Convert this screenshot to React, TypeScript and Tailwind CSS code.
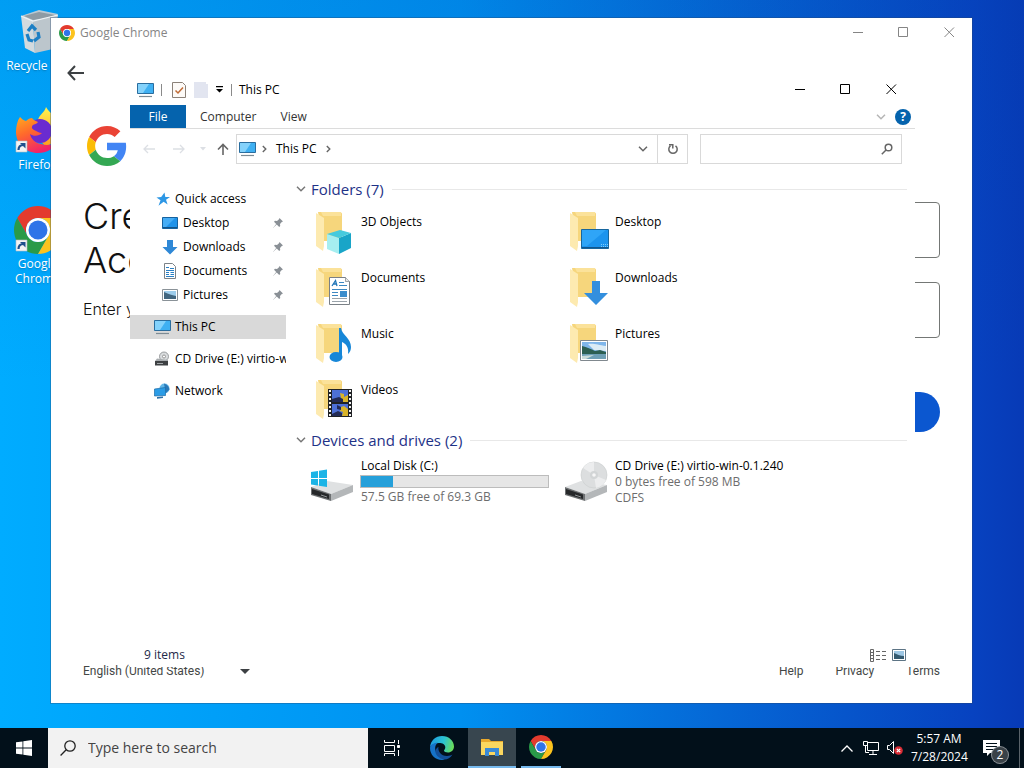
import { useState } from 'react'
import type { ReactNode } from 'react'

interface IconProps {
  className?: string
}

function ChromeIcon({ className }: IconProps) {
  return (
    <svg viewBox="0 0 48 48" className={className} aria-hidden="true">
      <path fill="#e33b2e" d="M24 12h20.78A24 24 0 0 0 3.22 12l10.39 18A12 12 0 0 1 24 12z" />
      <path fill="#2a9a48" d="M34.39 30 24 48A24 24 0 0 1 3.22 12l10.39 18a12 12 0 0 0 20.78 0z" />
      <path fill="#fcc31e" d="M24 12h20.78A24 24 0 0 1 24 48l10.39-18A12 12 0 0 0 24 12z" />
      <circle cx="24" cy="24" r="12" fill="#fff" />
      <circle cx="24" cy="24" r="9.5" fill="#2f74e8" />
    </svg>
  )
}

function GoogleLogo({ className }: IconProps) {
  return (
    <svg viewBox="0 0 48 48" className={className} aria-label="Google">
      <path fill="#EA4335" d="M24 9.5c3.54 0 6.71 1.22 9.21 3.6l6.85-6.85C35.9 2.38 30.47 0 24 0 14.62 0 6.51 5.38 2.56 13.22l7.98 6.19C12.43 13.72 17.74 9.5 24 9.5z" />
      <path fill="#4285F4" d="M46.98 24.55c0-1.57-.15-3.09-.38-4.55H24v9.02h12.94c-.58 2.96-2.26 5.48-4.78 7.18l7.73 6c4.51-4.18 7.09-10.36 7.09-17.65z" />
      <path fill="#FBBC05" d="M10.53 28.59c-.48-1.45-.76-2.99-.76-4.59s.27-3.14.76-4.59l-7.98-6.19C.92 16.46 0 20.12 0 24c0 3.88.92 7.54 2.56 10.78l7.97-6.19z" />
      <path fill="#34A853" d="M24 48c6.48 0 11.93-2.13 15.89-5.81l-7.73-6c-2.15 1.45-4.92 2.3-8.16 2.3-6.26 0-11.57-4.22-13.47-9.91l-7.98 6.19C6.51 42.62 14.62 48 24 48z" />
    </svg>
  )
}

function RecycleIcon() {
  return (
    <svg viewBox="0 0 48 48" className="size-12" aria-hidden="true">
      <path fill="#b9c9d3" d="m7 8 18-6 19 4-5 6-20 3z" />
      <path fill="#8e9ba4" d="m10 8 15-4 16 3-4 3-18 2z" />
      <path fill="#d3dade" d="m7 8 12 5 2 32-10-5z" />
      <path fill="#bcc6cc" d="m19 13 25-6-5 34-18 4z" />
      <path fill="none" stroke="#eef3f5" strokeWidth="1.2" d="m7 8 12 5 25-6" />
      <g fill="none" stroke="#1c7fc4" strokeWidth="3.2">
        <path d="m14 23 4-5 4 4" />
        <path d="m13 26 2 6 4 1" />
        <path d="m24 24 1 5-5 4" />
      </g>
    </svg>
  )
}

function ShortcutArrow() {
  return (
    <g>
      <path fill="#f4f4f4" stroke="#b5bcc4" strokeWidth=".6" d="M2 34h11v11H2z" />
      <path fill="none" stroke="#1f4f8c" strokeWidth="2.200" d="M4.500 43c0-3 1-5 5-5" />
      <path fill="#1f4f8c" d="M6 36h5.500v5.500z" />
    </g>
  )
}

function FirefoxIcon() {
  return (
    <svg viewBox="0 0 48 48" className="size-12" aria-hidden="true">
      <defs>
        <linearGradient id="fox" x1="0" y1="0" x2=".5" y2="1">
          <stop offset="0" stopColor="#ffab1f" />
          <stop offset=".45" stopColor="#ff6a2b" />
          <stop offset="1" stopColor="#f0226a" />
        </linearGradient>
        <linearGradient id="flame" x1="0" y1="0" x2="0" y2="1">
          <stop offset="0" stopColor="#fff34f" />
          <stop offset="1" stopColor="#ff9a1f" />
        </linearGradient>
      </defs>
      <path fill="url(#flame)" d="M32 0c-1 5-7 8-8 13-3 1-7 6-7 10l14 16c10-2 15-9 15-17 0-7-4-11-8-14-1-3-4-4-6-8z" />
      <circle cx="26" cy="24" r="12" fill="#6a2bd0" />
      <path fill="url(#fox)" d="M6 10c-3 4-4 10-4 15 0 12 10 21 22 21 9 0 16-4 20-12-5 4-11 5-17 3-6-1-10-5-11-10 4 3 9 2 12-1-3 0-5-2-8-3-2-1-3-3-1-5 1-1 4-1 5-3-2-1-5-2-6-4-2 0-4 1-6 3-3-1-4-2-6-4z" />
    </svg>
  )
}

function FirefoxShortcut() {
  return (
    <div className="relative size-12">
      <FirefoxIcon />
      <svg viewBox="0 0 48 48" className="absolute inset-0 size-12" aria-hidden="true"><ShortcutArrow /></svg>
    </div>
  )
}

function ChromeShortcut() {
  return (
    <div className="relative size-12">
      <ChromeIcon className="size-12" />
      <svg viewBox="0 0 48 48" className="absolute inset-0 size-12" aria-hidden="true"><ShortcutArrow /></svg>
    </div>
  )
}

function MonitorIcon() {
  return (
    <svg viewBox="0 0 18 16" className="h-4 w-[18px] shrink-0" aria-hidden="true">
      <path fill="#3fb0f2" stroke="#2a6d9e" d="M.5 1.500h16v10H.5z" />
      <path fill="#84d2fb" d="M1 2h11l-6 9H1z" />
      <path stroke="#7d8b94" strokeWidth="1.200" d="M2 14.500h13" />
    </svg>
  )
}

function StarIcon() {
  return (
    <svg viewBox="0 0 16 16" className="size-4 shrink-0" aria-hidden="true">
      <path fill="#2d97e5" d="m9.500 1.500.8 4.400 4.700.2-4 2.700 1.600 4.700-4-2.700-5.100 4 2-5.500L1.500 6.500l4.700-.6z" />
    </svg>
  )
}

function DesktopSmall() {
  return (
    <svg viewBox="0 0 16 16" className="size-4 shrink-0" aria-hidden="true">
      <path fill="#1f93ea" stroke="#15629f" d="M.5 2.500h15v11H.5z" />
      <path fill="#46adf5" d="M1 3h12L4 12H1z" />
      <path stroke="#135488" d="M1 12.500h14" />
    </svg>
  )
}

function DownloadSmall() {
  return (
    <svg viewBox="0 0 16 16" className="size-4 shrink-0" aria-hidden="true">
      <path fill="#2f88d6" d="M5 1h6v7h4.500L8 15.500.5 8H5z" />
    </svg>
  )
}

function DocumentSmall() {
  return (
    <svg viewBox="0 0 16 16" className="size-4 shrink-0" aria-hidden="true">
      <path fill="#fff" stroke="#7b8288" d="M2.500.5h8l3 3v12h-11z" />
      <path stroke="#2a80c4" d="M4 4.500h3M8 5.500h4M4 7.500h8M4 9.500h3M4 11.500h3M4 13.500h8M8.500 9.500h3.500M8.500 11.500h3.500" />
    </svg>
  )
}

function PictureSmall() {
  return (
    <svg viewBox="0 0 16 16" className="size-4 shrink-0" aria-hidden="true">
      <path fill="#fff" stroke="#8a9298" d="M.5 2.500h15v11H.5z" />
      <path fill="#9dcdec" d="M2 4h12v8H2z" />
      <path fill="#41667f" d="M2 5c3 1 6 3 12 4v3H2z" />
    </svg>
  )
}

function DriveSmall() {
  return (
    <svg viewBox="0 0 16 16" className="size-4 shrink-0" aria-hidden="true">
      <circle cx="10" cy="5.500" r="4.500" fill="#d9dcde" stroke="#85898c" strokeWidth=".8" />
      <circle cx="10" cy="5.500" r="1.500" fill="#fff" stroke="#777" strokeWidth=".7" />
      <path fill="#a9adb0" d="m1 10 2-2.500 11 1.500v1.500z" />
      <path fill="#3d4042" d="M1 10h13v4.500H1z" />
      <path stroke="#a2a6a8" d="M3 12.500h6" />
    </svg>
  )
}

function NetworkSmall() {
  return (
    <svg viewBox="0 0 16 16" className="size-4 shrink-0" aria-hidden="true">
      <circle cx="10.500" cy="5.500" r="5" fill="#63b7e8" />
      <path fill="#2a79b8" d="M10 .5c3 1 5 3 5.500 6L12 10l-1-4z" />
      <path fill="#2b9ce6" stroke="#1b6ba8" strokeWidth=".7" d="m.5 6 11-1.500v8L.5 13z" />
      <path fill="#2d6fa6" d="m3 14 6-.5v1.500l-6 .8z" />
    </svg>
  )
}

function Folder({ children }: { children: ReactNode }) {
  return (
    <svg viewBox="0 0 48 48" className="size-12 shrink-0" aria-hidden="true">
      <path fill="#f6d67c" d="M9 4h22c1 0 2 1 2 2v27H14z" />
      <path fill="#fbe29a" d="M12 4h20v4H14z" />
      <path fill="#fdeab0" d="m7 5 8 5v28l-1 5-7-5z" />
      {children}
    </svg>
  )
}

const folders: { name: string; art: ReactNode }[] = [
  {
    name: '3D Objects',
    art: (
      <g>
        <path fill="#a6eef0" d="m18 26 12 4v16l-12-5z" />
        <path fill="#19a5c8" d="m30 30 12-5v15l-12 6z" />
        <path fill="#46cadd" d="m18 26 13-4 11 3-12 5z" />
      </g>
    ),
  },
  {
    name: 'Desktop',
    art: (
      <g>
        <path fill="#1c94ee" stroke="#17669e" d="M18.500 21.500h27v19h-27z" />
        <path fill="#2fa5f7" d="M19 22h24L24 38h-5z" />
        <path stroke="#10568f" d="M19 39.500h26" />
        <path stroke="#7dcdfb" strokeDasharray="1 1" d="M38 36.500h7M38 38.500h7" />
      </g>
    ),
  },
  {
    name: 'Documents',
    art: (
      <g>
        <path fill="#fff" stroke="#7a8086" d="M20.500 13.500h16l4 4v23h-20z" />
        <path fill="#e5e8ea" stroke="#7a8086" strokeWidth=".7" d="M36.500 13.500v4h4" />
        <path fill="none" stroke="#2176b8" strokeWidth="1.300" d="m23 22 3.500-5.500L28 22m-3.500-2h3" />
        <path stroke="#3d88c2" d="M30 18.500h5M30 21.500h8M23 25.500h15M23 28.500h6M23 31.500h6" />
        <path fill="#3c8dcc" d="M31 27h7v6h-7z" />
        <path stroke="#9aa3aa" d="M23 34.500h15M23 37.500h15" />
      </g>
    ),
  },
  {
    name: 'Downloads',
    art: <path fill="#338fde" d="M29 17h8v12h8L33 41 21 29h8z" />,
  },
  {
    name: 'Music',
    art: (
      <g>
        <path fill="#1787d8" d="M32 8c1 7 10 10 10 19 0 3-1 5-3 7 1-7-2-10-6-12v14h-3V8z" />
        <ellipse cx="27" cy="37" rx="6.500" ry="5" fill="#1787d8" />
      </g>
    ),
  },
  {
    name: 'Pictures',
    art: (
      <g>
        <path fill="#fff" stroke="#80888e" d="M17.500 20.500h27v20h-27z" />
        <path fill="#7fb6ea" d="M19 22h24v17H19z" />
        <path fill="#dcecf5" d="M25 24c6-1 10 1 18 2v5l-12-1z" />
        <path fill="#2c5f52" d="M19 26c5 1 9 3 13 5l5-1 6 2v2H19z" />
        <path fill="#6d9fb5" d="M19 34h24v5H19z" />
        <path fill="#c9dbd9" d="m19 36 12-1-8 4h-4z" />
      </g>
    ),
  },
  {
    name: 'Videos',
    art: (
      <g>
        <path fill="#202225" d="M19 13h24v28H19z" />
        <path fill="#4d70d6" d="M23 14h16v12H23zM23 28h16v12H23z" />
        <path fill="#d8b32a" d="m31 17 4 1v3l4-2v7h-7l-3-3 3-1zM32 31l3-1 4 3v7h-6l1-4-3-1z" />
        <path fill="#222a55" d="m23 23 7-2 4 2v3H23zM28 29l4 2v3l-4-1zM23 38l6-3 4 2v3H23z" />
        <path stroke="#f3f3f3" strokeWidth="2" strokeDasharray="2 2" d="M21 14v27M41 14v27" />
      </g>
    ),
  },
]

const places = [
  { name: 'Desktop', icon: <DesktopSmall /> },
  { name: 'Downloads', icon: <DownloadSmall /> },
  { name: 'Documents', icon: <DocumentSmall /> },
  { name: 'Pictures', icon: <PictureSmall /> },
]

const shortcuts = [
  { name: 'Recycle Bin', icon: <RecycleIcon /> },
  { name: 'Firefox', icon: <FirefoxShortcut /> },
  { name: 'Google Chrome', icon: <ChromeShortcut /> },
]

function PinIcon() {
  return (
    <svg viewBox="0 0 12 12" className="size-3 shrink-0" aria-hidden="true">
      <path fill="#8a9096" d="m7.500 1 3.500 3.500-1.200.6L8 7l.2 2-1 1L4.700 7.500 1 11l3.200-4L2 4.800l1-1 2 .2 2-1.800z" />
    </svg>
  )
}

function DriveBase() {
  return (
    <g>
      <path fill="#dfe1e2" d="m2 29 16-6 26 4-22 9z" />
      <path fill="#b4b7b9" d="m22 36 22-9v7l-22 9z" />
      <path fill="#6d7072" d="m2 29 20 7v7L2 37z" />
      <path fill="#26282a" d="m3 31 17 5.500v4.500L3 36z" />
      <path stroke="#8f9496" d="m12 37 6 2" />
    </g>
  )
}

function WindowButtons() {
  return (
    <div className="flex h-full">
      <button aria-label="Minimize" className="flex w-[46px] items-center justify-center">
        <svg viewBox="0 0 11 11" className="size-[11px]" fill="none" stroke="currentColor"><path d="M0 5.500h10" /></svg>
      </button>
      <button aria-label="Maximize" className="flex w-[45px] items-center justify-center">
        <svg viewBox="0 0 11 11" className="size-[11px]" fill="none" stroke="currentColor"><path d="M.5.5h9v9h-9z" /></svg>
      </button>
      <button aria-label="Close" className="flex w-[46px] items-center justify-center">
        <svg viewBox="0 0 11 11" className="size-[11px]" fill="none" stroke="currentColor"><path d="m.5.5 9.500 9.500M10 .5.500 10" /></svg>
      </button>
    </div>
  )
}

function ChromeWindow() {
  const fieldCls = 'h-14 w-full rounded border border-[#747775] px-4 text-base'
  return (
    <section className="absolute top-[18px] right-[52px] bottom-[65px] left-[51px] flex flex-col bg-white shadow-[0_0_0_1px_rgba(40,70,110,0.35)]">
      <header className="flex h-[29px] shrink-0 items-center pl-2 text-[#858585]">
        <ChromeIcon className="size-4" />
        <h1 className="ml-[5px] flex-1 text-xs">Google Chrome</h1>
        <WindowButtons />
      </header>
      <button aria-label="Back" className="mt-4 ml-4 flex size-[18px] items-center">
        <svg viewBox="0 0 18 18" className="size-[18px]" fill="none" stroke="#3c4043" strokeWidth="2"><path d="M17 10H2M8 3 1.500 10 8 17" /></svg>
      </button>
      <main className="flex flex-1 px-8 pt-[45px] font-['Inter',sans-serif] text-[#111]">
        <div className="w-1/2">
          <GoogleLogo className="ml-1 size-10" />
          <h2 className="mt-7 max-w-[300px] text-4xl leading-[44px] font-light">Create a Google Account</h2>
          <p className="mt-[15px] text-base leading-6 font-light">Enter your name</p>
        </div>
        <form className="flex w-1/2 flex-col items-end pt-[76px]" onSubmit={e => e.preventDefault()}>
          <input aria-label="First name" className={fieldCls} />
          <input aria-label="Last name" className={fieldCls + ' mt-6'} />
          <button type="submit" className="mt-[54px] h-10 rounded-full bg-[#0b57d0] px-8 text-sm text-white">Next</button>
        </form>
      </main>
      <footer className="flex h-16 shrink-0 items-center px-8 font-['Roboto',sans-serif] text-xs text-[#444746]">
        <div className="relative flex items-center">
          <select aria-label="Language" className="w-[167px] appearance-none bg-transparent">
            <option>English (United States)</option>
          </select>
          <svg viewBox="0 0 10 5" className="pointer-events-none absolute right-0 h-[5px] w-[10px]"><path fill="#3c4043" d="M0 0h10L5 5z" /></svg>
        </div>
        <nav className="ml-auto flex gap-8">
          <a href="#help">Help</a>
          <a href="#privacy">Privacy</a>
          <a href="#terms">Terms</a>
        </nav>
      </footer>
    </section>
  )
}

function Chevron({ className }: IconProps) {
  return (
    <svg viewBox="0 0 10 6" className={`h-[6px] w-[10px] shrink-0 ${className ?? ''}`} fill="none" stroke="currentColor" strokeWidth="1.500" aria-hidden="true">
      <path d="m1 .8 4 4 4-4" />
    </svg>
  )
}

function Crumb() {
  return (
    <svg viewBox="0 0 5 8" className="h-2 w-[5px] shrink-0" fill="none" stroke="#666" strokeWidth="1.400" aria-hidden="true">
      <path d="m.8 1 3 3-3 3" />
    </svg>
  )
}

function GroupHeading({ children }: { children: ReactNode }) {
  return (
    <div className="flex h-6 items-center text-[#1e3287]">
      <Chevron className="text-[#777]" />
      <h3 className="ml-[5px] text-[15px] leading-6">{children}</h3>
      <div className="ml-2 h-px flex-1 bg-[#e8e8e8]" />
    </div>
  )
}

function ExplorerWindow() {
  const [selected, setSelected] = useState('This PC')
  const roots = [
    { name: 'This PC', icon: <MonitorIcon /> },
    { name: 'CD Drive (E:) virtio-win-0.1.240', icon: <DriveSmall /> },
    { name: 'Network', icon: <NetworkSmall /> },
  ]

  return (
    <section className="absolute top-[74px] right-[109px] bottom-[101px] left-[130px] flex flex-col bg-white text-xs text-black">
      <header className="flex h-[31px] shrink-0 items-center pr-px pl-[7px]">
        <MonitorIcon />
        <div className="mx-1.5 h-3 w-px bg-[#8a8a8a]" />
        <button aria-label="Properties" className="ml-1">
          <svg viewBox="0 0 14 16" className="h-4 w-3.5"><path fill="#fdfaf7" stroke="#8b8178" d="M.5.5h10l3 3v12H.5z" /><path fill="none" stroke="#c06b35" strokeWidth="1.500" d="m3.500 8.500 2.500 2.500 5-5.500" /></svg>
        </button>
        <button aria-label="New folder" className="ml-2">
          <svg viewBox="0 0 14 16" className="h-4 w-3.5"><path fill="#e2e5f0" d="M0 0h12v2h2v14H0z" /></svg>
        </button>
        <button aria-label="Customize Quick Access Toolbar" className="ml-2">
          <svg viewBox="0 0 7 7" className="size-[7px]"><path d="M0 0h7v1.200H0zM0 3h7L3.500 6.500z" /></svg>
        </button>
        <div className="mr-[7px] ml-2 h-3 w-px bg-[#8a8a8a]" />
        <h2 className="flex-1">This PC</h2>
        <WindowButtons />
      </header>

      <div role="tablist" className="flex h-6 shrink-0 items-center border-b border-[#dcdcdc] pr-1 text-[#333]">
        <button role="tab" className="h-full w-14 bg-[#0563ad] text-white">File</button>
        <button role="tab" className="px-3.5">Computer</button>
        <button role="tab" className="px-2.5">View</button>
        <button aria-label="Expand the Ribbon" className="ml-auto text-[#b5b5b5]"><Chevron /></button>
        <button aria-label="Help" className="ml-[9px] size-4 rounded-full bg-[#0563ad] text-xs leading-4 font-bold text-white">?</button>
      </div>

      <div className="mt-[5px] flex h-[30px] shrink-0 items-stretch pr-[13px]">
        <div className="flex w-[106px] items-center pl-[13px] text-[#dcdfe4]">
          <button aria-label="Back"><svg viewBox="0 0 12 10" className="h-2.5 w-3" fill="none" stroke="currentColor" strokeWidth="1.300"><path d="M12 5H1M5 1 1 5l4 4" /></svg></button>
          <button aria-label="Forward" className="ml-[18px]"><svg viewBox="0 0 12 10" className="h-2.5 w-3" fill="none" stroke="currentColor" strokeWidth="1.300"><path d="M0 5h11M7 1l4 4-4 4" /></svg></button>
          <button aria-label="Recent locations" className="ml-[15px]"><svg viewBox="0 0 6 4" className="h-1 w-1.5" fill="currentColor"><path d="M0 0h6L3 3.500z" /></svg></button>
          <button aria-label="Up" className="ml-[11px] text-[#666]"><svg viewBox="0 0 12 12" className="size-3" fill="none" stroke="currentColor" strokeWidth="1.600"><path d="M6 12V1.500M1 6.500l5-5 5 5" /></svg></button>
        </div>
        <div className="flex flex-1 items-center border border-[#d9d9d9] pl-0.5">
          <MonitorIcon />
          <div className="flex flex-1 items-center gap-[9px] pl-[5px]">
            <Crumb />
            <span>This PC</span>
            <Crumb />
          </div>
          <button aria-label="Previous locations" className="mr-[9px] text-[#666]"><Chevron /></button>
          <button aria-label="Refresh" className="flex h-full w-[30px] items-center justify-center border-l border-[#d9d9d9]">
            <svg viewBox="0 0 12 12" className="size-3" fill="none" stroke="#666" strokeWidth="1.500"><path d="M8.500 2.800a4.200 4.200 0 1 1-5 0M2 1.800h3.800v3.800" /></svg>
          </button>
        </div>
        <div className="ml-3 flex w-[202px] items-center border border-[#d9d9d9]">
          <input aria-label="Search This PC" className="w-full flex-1 px-2 outline-none" />
          <svg viewBox="0 0 12 12" className="mr-2 size-3" fill="none" stroke="#666" strokeWidth="1.500"><circle cx="7.500" cy="4.500" r="3.300" /><path d="M5 7 .8 11.200" /></svg>
        </div>
      </div>

      <div className="flex flex-1 pt-3">
        <nav className="w-[156px] shrink-0 overflow-hidden pt-[11px] whitespace-nowrap">
          <button className="flex h-6 w-full items-center gap-1 pl-[25px]"><StarIcon />Quick access</button>
          {places.map(p => (
            <button key={p.name} className="flex h-6 w-full items-center gap-[5px] pr-0.5 pl-8">
              {p.icon}
              <span className="flex-1 text-left">{p.name}</span>
              <PinIcon />
            </button>
          ))}
          {roots.map(r => (
            <button
              key={r.name}
              onClick={() => setSelected(r.name)}
              className={`mt-2 flex h-6 w-full items-center pl-6 ${selected === r.name ? 'bg-[#d9d9d9]' : ''}`}
            >
              <span className="flex w-[21px] shrink-0 items-center">{r.icon}</span>
              {r.name}
            </button>
          ))}
        </nav>

        <main className="ml-[10px] flex-1 pt-px pr-2">
          <GroupHeading>Folders (7)</GroupHeading>
          <div className="mt-[7px] grid grid-cols-[repeat(auto-fill,254px)] pl-[13px]">
            {folders.map(f => (
              <button key={f.name} className="flex h-14 items-start gap-1 text-left">
                <Folder>{f.art}</Folder>
                <span className="mt-1.5 leading-4">{f.name}</span>
              </button>
            ))}
          </div>
          <div className="-mt-1"><GroupHeading>Devices and drives (2)</GroupHeading></div>
          <div className="mt-1.5 grid grid-cols-[repeat(auto-fill,254px)] pl-[13px] leading-4 text-[#6d6d6d]">
            <button className="flex items-start gap-[3px] text-left">
              <svg viewBox="0 0 48 48" className="size-12 shrink-0" aria-hidden="true">
                <DriveBase />
                <path fill="#1bb4e6" d="m2 14 7-1v7H2zM10 12.800 18 11.500V20h-8zM2 21h7v6.500l-7-1zM10 21h8v8l-8-1.300z" />
              </svg>
              <span className="w-[189px]">
                <span className="block pl-px text-black">Local Disk (C:)</span>
                <span className="my-px block h-[13px] border border-[#bcbcbc] bg-[#e6e6e6]">
                  <span className="block h-full w-[17%] bg-[#26a0da]" />
                </span>
                <span className="block pl-px">57.5 GB free of 69.3 GB</span>
              </span>
            </button>
            <button className="flex items-start gap-1 text-left">
              <svg viewBox="0 0 48 48" className="size-12 shrink-0" aria-hidden="true">
                <DriveBase />
                <circle cx="31" cy="17" r="13" fill="#dcdedf" stroke="#c9cccd" strokeWidth=".6" />
                <path fill="#ecedee" d="M31 17 20 10a13 13 0 0 1 11-6zM31 17l12 5a13 13 0 0 1-10 8z" />
                <circle cx="31" cy="17" r="4" fill="#d2d5d6" />
                <circle cx="31" cy="17" r="1.800" fill="#f7f7f7" />
              </svg>
              <span>
                <span className="block whitespace-nowrap text-black">CD Drive (E:) virtio-win-0.1.240</span>
                <span className="block">0 bytes free of 598 MB</span>
                <span className="block">CDFS</span>
              </span>
            </button>
          </div>
        </main>
      </div>

      <footer className="flex h-6 shrink-0 items-center pr-[9px] pl-3.5 text-[#1e2a4a]">
        <span className="flex-1">9 items</span>
        <button aria-label="Details view">
          <svg viewBox="0 0 18 13" className="h-[13px] w-[18px]" stroke="#666" fill="none"><path d="M1.500.5h3v12h-3zM1.500 3.500h3M1.500 6.500h3M1.500 9.500h3" /><path strokeDasharray="4 2" d="M7 2.500h10M7 6.500h10M7 10.500h10" /></svg>
        </button>
        <button aria-label="Large icons view" className="ml-[5px]">
          <svg viewBox="0 0 14 12" className="h-3 w-3.5"><path fill="#fff" stroke="#5d7485" d="M.5.5h13v11H.5z" /><path fill="#9dc7e4" d="M2 2h10v8H2z" /><path fill="#345a70" d="M2 4c3 1 6 3 10 3v3H2z" /></svg>
        </button>
      </footer>
    </section>
  )
}

function EdgeIcon() {
  return (
    <svg viewBox="0 0 24 24" className="size-6" aria-hidden="true">
      <defs>
        <linearGradient id="edgeTop" x1="0" y1=".3" x2="1" y2=".5">
          <stop offset="0" stopColor="#1d9be0" />
          <stop offset=".55" stopColor="#2bc3d2" />
          <stop offset="1" stopColor="#6bdc58" />
        </linearGradient>
      </defs>
      <path fill="url(#edgeTop)" d="M0 11C.7 4.500 5.500 0 12 0c7 0 12 5 12 10.500 0 3.800-3 6-6 6-2.500 0-4-1-4-2 0-.7 1.300-1.200 1.300-3.300C15.300 8.500 12.500 7 9 7c-4 0-7.500 1.800-9 4z" />
      <path fill="#1673c8" d="M0 12c0-3 4-5.500 8-5.200C5 9 4.500 12 6 16c1.500 4 5.500 6.500 9 6.800-1 .8-2 1.200-3 1.200C5 24 0 18.500 0 12z" />
      <path fill="#134f98" d="M8.500 11c-1 4 2.500 9 8.500 9 2.500 0 4.500-1 5.500-1.500-2 3.300-5 5-8 5-5.500-.5-10-5.500-9-9 .3-1.500 1.500-3 3-3.500z" />
    </svg>
  )
}

function Taskbar() {
  return (
    <footer className="absolute inset-x-0 bottom-0 flex h-10 items-stretch bg-[#02101a] text-white">
      <button aria-label="Start" className="flex w-12 items-center justify-center">
        <svg viewBox="0 0 16 16" className="size-4" fill="#fff"><path d="m0 2.300 6.500-.9v6.200H0zM7.300 1.300 16 0v7.600H7.300zM0 8.400h6.500v6.200L0 13.700zM7.300 8.400H16V16l-8.700-1.300z" /></svg>
      </button>
      <label className="flex w-80 items-center gap-3 bg-[#f2f2f2] pl-3 text-[#444]">
        <svg viewBox="0 0 16 16" className="size-4 shrink-0" fill="none" stroke="#222" strokeWidth="1.300"><circle cx="10" cy="6" r="5.200" /><path d="M6.200 9.800.6 15.500" /></svg>
        <input aria-label="Search" placeholder="Type here to search" className="w-full bg-transparent text-sm outline-none placeholder:text-[#444]" />
      </label>
      <button aria-label="Task View" className="flex w-12 items-center justify-center">
        <svg viewBox="0 0 16 16" className="size-4" fill="none" stroke="#fff"><path d="M.5 0v2.500h10V0M.5 5.500h10v6H.5zM.5 16v-2.500h10V16M14.500 0v4M14.500 10v6" /><path fill="#fff" d="M13.500 5.500h2v2h-2z" /></svg>
      </button>
      <button aria-label="Edge" className="flex w-[52px] items-center justify-center"><EdgeIcon /></button>
      <button aria-label="File Explorer" className="flex w-12 items-center justify-center border-b-2 border-[#76b9ed] bg-[#38464f]">
        <svg viewBox="0 0 22 18" className="h-[18px] w-[22px]">
          <path fill="#e9a92c" d="M0 1h8l2 2h12v14H0z" />
          <path fill="#fbd75f" d="M0 4h22v13H0z" />
          <path fill="#3b8ad6" d="M4 10h14v8h-4v-4H8v4H4z" />
        </svg>
      </button>
      <button aria-label="Google Chrome" className="ml-[5px] flex w-10 items-center justify-center border-b-2 border-[#76b9ed]"><ChromeIcon className="size-6" /></button>

      <div className="ml-auto flex items-center">
        <button aria-label="Show hidden icons">
          <svg viewBox="0 0 12 7" className="h-[7px] w-3" fill="none" stroke="#fff" strokeWidth="1.300"><path d="m.5 6.500 5.500-5.500 5.500 5.500" /></svg>
        </button>
        <button aria-label="Network" className="ml-2.5">
          <svg viewBox="0 0 16 14" className="h-3.5 w-4" fill="none" stroke="#fff"><path d="M4.500 1.500h11v8h-11zM10 9.500v4M6 13.500h8M.5.500h4v4h-4zM2.500 4.500v7H6" /></svg>
        </button>
        <button aria-label="Volume" className="ml-2">
          <svg viewBox="0 0 16 14" className="h-3.5 w-4"><path fill="none" stroke="#fff" d="M.5 4.500h2l4-4v12l-4-4h-2z" /><circle cx="11.500" cy="9.500" r="4.300" fill="#d92c35" /><path stroke="#fff" strokeWidth="1.200" d="m9.800 7.800 3.400 3.400M13.200 7.800l-3.400 3.400" /></svg>
        </button>
        <button className="ml-2 w-[56px] text-center text-xs leading-[18px] whitespace-nowrap">5:57 AM<br />7/28/2024</button>
        <button aria-label="2 new notifications" className="relative mr-3 ml-4 size-6">
          <svg viewBox="0 0 24 24" className="size-6"><path fill="#fff" d="M0 4h17v13H7l-3 3v-3H0z" /><path stroke="#02101a" strokeWidth="1.200" d="M3 7.500h11M3 10.500h11M3 13.500h8" /></svg>
          <span className="absolute -right-px -bottom-[3px] size-4 rounded-full bg-[#3a4248] text-xs leading-4 ring-1 ring-[#8b9196]">2</span>
        </button>
        <div className="mr-1 h-10 w-px bg-[#5a636a]" />
      </div>
    </footer>
  )
}

export default function App() {
  return (
    <div className="relative h-screen w-full overflow-hidden bg-[linear-gradient(to_bottom,rgba(0,70,170,0.14),transparent_50%),linear-gradient(to_right,#00acff,#0090f0_45%,#0568d6_70%,#0742c0_95%,#073ab6)] font-['Open_Sans',sans-serif]">
      <div className="flex w-[75px] flex-col pt-2">
        {shortcuts.map(s => (
          <button key={s.name} className="flex h-[99px] w-full flex-col items-center px-1 text-xs leading-[15px] text-white text-shadow-sm">
            {s.icon}
            <span className="mt-0.5">{s.name}</span>
          </button>
        ))}
      </div>
      <ChromeWindow />
      <ExplorerWindow />
      <Taskbar />
    </div>
  )
}
